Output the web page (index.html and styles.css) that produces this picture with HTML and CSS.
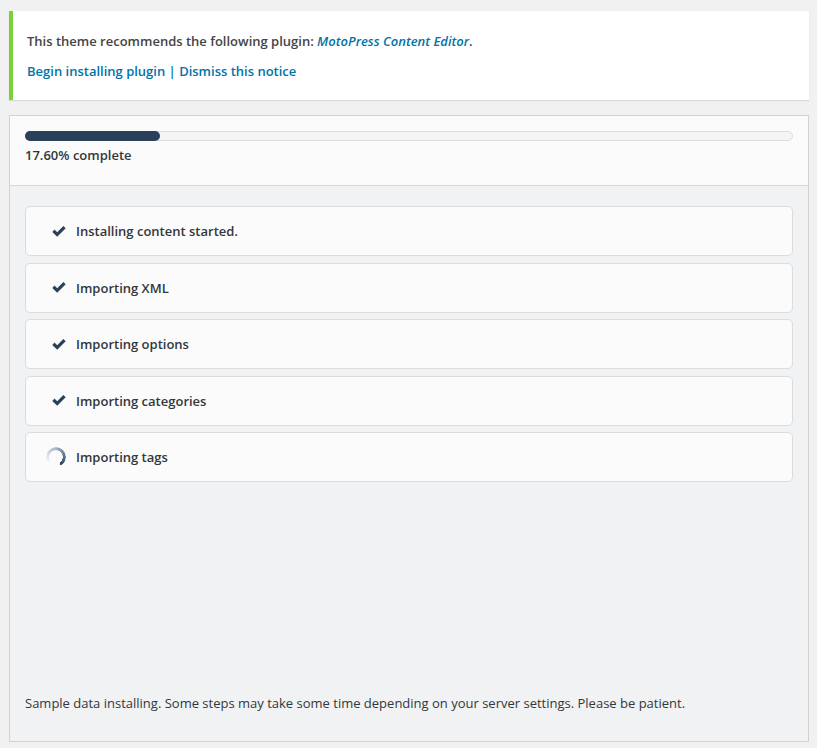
FILE: index.html
```html
<!DOCTYPE html>
<html>
<head>
<meta charset="utf-8">
<link rel="stylesheet" href="styles.css">
</head>
<body>
<div class="notice">
  <p class="notice-line">This theme recommends the following plugin: <a class="plugin" href="#">MotoPress Content Editor</a>.</p>
  <p class="notice-line links"><a href="#">Begin installing plugin</a> | <a href="#">Dismiss this notice</a></p>
</div>
<div class="installer">
  <div class="progress-head">
    <div class="track"><div class="fill" style="width:17.6%"></div></div>
    <div class="percent">17.60% complete</div>
  </div>
  <div class="steps-area">
    <ul class="steps">
      <li class="step"><span class="icon"><svg class="check" viewBox="0 0 14 11" width="14" height="11"><path d="M0.3 5.9 L2.5 3.6 L5.2 6.2 L11.4 0 L13.7 2.3 L5.2 10.8 Z" fill="#2b4158"/></svg></span>Installing content started.</li>
      <li class="step"><span class="icon"><svg class="check" viewBox="0 0 14 11" width="14" height="11"><path d="M0.3 5.9 L2.5 3.6 L5.2 6.2 L11.4 0 L13.7 2.3 L5.2 10.8 Z" fill="#2b4158"/></svg></span>Importing XML</li>
      <li class="step"><span class="icon"><svg class="check" viewBox="0 0 14 11" width="14" height="11"><path d="M0.3 5.9 L2.5 3.6 L5.2 6.2 L11.4 0 L13.7 2.3 L5.2 10.8 Z" fill="#2b4158"/></svg></span>Importing options</li>
      <li class="step"><span class="icon"><svg class="check" viewBox="0 0 14 11" width="14" height="11"><path d="M0.3 5.9 L2.5 3.6 L5.2 6.2 L11.4 0 L13.7 2.3 L5.2 10.8 Z" fill="#2b4158"/></svg></span>Importing categories</li>
      <li class="step"><span class="icon"><span class="spinner"></span></span>Importing tags</li>
    </ul>
    <p class="note">Sample data installing. Some steps may take some time depending on your server settings. Please be patient.</p>
  </div>
</div>
</body>
</html>
```
FILE: styles.css
```css
html, body {
  margin: 0;
  padding: 0;
}
body {
  background: #f1f1f1;
  font-family: "Open Sans", "Liberation Sans", sans-serif;
  font-size: 13px;
  color: #444;
  padding: 11px 8px 0 9px;
  height: 748px;
  box-sizing: border-box;
}
a {
  color: #0073aa;
  text-decoration: none;
}
.notice {
  background: #fff;
  border-left: 4px solid #7ad03a;
  box-shadow: 0 1px 1px rgba(0,0,0,0.1);
  padding: 20px 12px 19px 14px;
  display: flex;
  flex-direction: column;
  gap: 10px;
}
.notice-line {
  margin: 0;
  line-height: 20px;
  font-weight: 600;
  color: #444;
}
.plugin {
  font-style: italic;
}
.links {
  color: #0073aa;
}
.installer {
  margin-top: 15px;
  border: 1px solid #d2d2d2;
  height: 627px;
  box-sizing: border-box;
  display: flex;
  flex-direction: column;
}
.progress-head {
  background: #fbfbfb;
  padding: 15px 15px 20px;
  border-bottom: 1px solid #d6d6d6;
}
.track {
  height: 10px;
  box-sizing: border-box;
  background: #f5f5f5;
  border: 1px solid #dcdcdc;
  border-radius: 5px;
  position: relative;
}
.fill {
  position: absolute;
  left: -1px;
  top: -1px;
  height: 10px;
  background: #2a4159;
  border-radius: 5px;
}
.percent {
  margin-top: 4px;
  line-height: 20px;
  font-weight: 600;
  color: #32373c;
}
.steps-area {
  flex: 1;
  background: #f1f2f3;
  padding: 20px 15px 28px;
  display: flex;
  flex-direction: column;
}
.steps {
  list-style: none;
  margin: 0;
  padding: 0;
  display: flex;
  flex-direction: column;
  gap: 6.5px;
}
.step {
  height: 50px;
  box-sizing: border-box;
  background: #fbfbfb;
  border: 1px solid #dcdcdc;
  border-radius: 5px;
  display: flex;
  align-items: center;
  padding-left: 20px;
  font-weight: 600;
  color: #32373c;
  line-height: 20px;
}
.icon {
  width: 20px;
  height: 20px;
  margin-right: 10px;
  display: flex;
  align-items: center;
  justify-content: flex-end;
}
.check {
  display: block;
}
.spinner {
  width: 20px;
  height: 20px;
  border-radius: 50%;
  background: conic-gradient(from 225deg, rgba(42,65,89,0) 0deg, rgba(60,100,140,0.35) 110deg, #2a4159 285deg, transparent 286deg);
  -webkit-mask: radial-gradient(circle, transparent 6.5px, #000 7px);
  mask: radial-gradient(circle, transparent 6.5px, #000 7px);
}
.note {
  margin: auto 0 0;
  line-height: 20px;
  color: #32373c;
}
```
